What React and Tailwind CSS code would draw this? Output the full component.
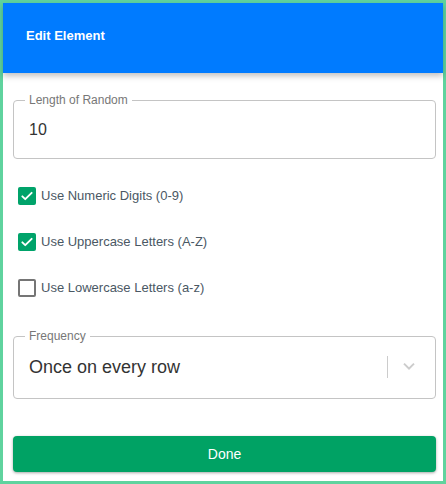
import { useState } from "react";

function Check({ checked, label, onToggle }) {
  return (
    <label className="flex items-center h-[18px] gap-[5px] cursor-pointer" onClick={onToggle}>
      {checked ? (
        <span className="w-[18px] h-[18px] ml-[5px] rounded-[2px] bg-[#00a36a] flex items-center justify-center">
          <svg width="14" height="14" viewBox="0 0 24 24" fill="none" stroke="white" strokeWidth="3.2" strokeLinecap="round" strokeLinejoin="round">
            <path d="M4 12.5l5 5L20 6.5" />
          </svg>
        </span>
      ) : (
        <span className="w-[18px] h-[18px] ml-[5px] rounded-[2px] border-2 border-[#757575] bg-white" />
      )}
      <span className="text-[13px] text-[#4a5864]">{label}</span>
    </label>
  );
}

export default function App() {
  const [opts, setOpts] = useState({ num: true, upper: true, lower: false });
  const toggle = (k) => setOpts((o) => ({ ...o, [k]: !o[k] }));

  return (
    <div className="w-[446px] h-[484px] border-[3px] border-[#5fd39e] bg-white flex flex-col font-['Liberation_Sans',Arial,sans-serif]">
      <div className="h-[70px] shrink-0 bg-[#007bff] flex items-center pl-[23px] shadow-[0_3px_6px_rgba(0,0,0,0.25)] relative z-10">
        <h1 className="text-white text-[13px] font-bold -mt-[4px]">Edit Element</h1>
      </div>

      <div className="flex-1 flex flex-col pl-[10px] pr-[7px]">
        <fieldset className="mt-[21px] h-[65px] border border-[#c4c4c4] rounded-[4px] px-[11px] pb-0">
          <legend className="px-[4px] text-[12px] text-[#777] leading-[12px]">Length of Random</legend>
          <div className="text-[16px] text-[#333] pt-[12px] pl-[4px]">10</div>
        </fieldset>

        <div className="flex flex-col gap-[28px] mt-[28px]">
          <Check checked={opts.num} label="Use Numeric Digits (0-9)" onToggle={() => toggle("num")} />
          <Check checked={opts.upper} label="Use Uppercase Letters (A-Z)" onToggle={() => toggle("upper")} />
          <Check checked={opts.lower} label="Use Lowercase Letters (a-z)" onToggle={() => toggle("lower")} />
        </div>

        <fieldset className="mt-[33px] h-[69px] border border-[#c4c4c4] rounded-[4px] pl-[11px] pr-0">
          <legend className="px-[4px] text-[12px] text-[#777] leading-[12px]">Frequency</legend>
          <div className="flex items-center h-[56px] -mt-[3px]">
            <span className="flex-1 pl-[4px] text-[18px] text-[#333]">Once on every row</span>
            <span className="w-px h-[22px] bg-[#ccc]" />
            <span className="w-[41px] mr-[6px] flex items-center justify-center">
              <svg width="20" height="20" viewBox="0 0 20 20" fill="#ccc">
                <path d="M4.3 7.3l1.4-1.4L10 10.2l4.3-4.3 1.4 1.4L10 13z" />
              </svg>
            </span>
          </div>
        </fieldset>

        <button className="mt-[37px] h-[36px] w-full rounded-[4px] bg-[#00a264] text-white text-[14px] shadow-[0_1px_3px_rgba(0,0,0,0.35)]">
          Done
        </button>
      </div>
    </div>
  );
}
